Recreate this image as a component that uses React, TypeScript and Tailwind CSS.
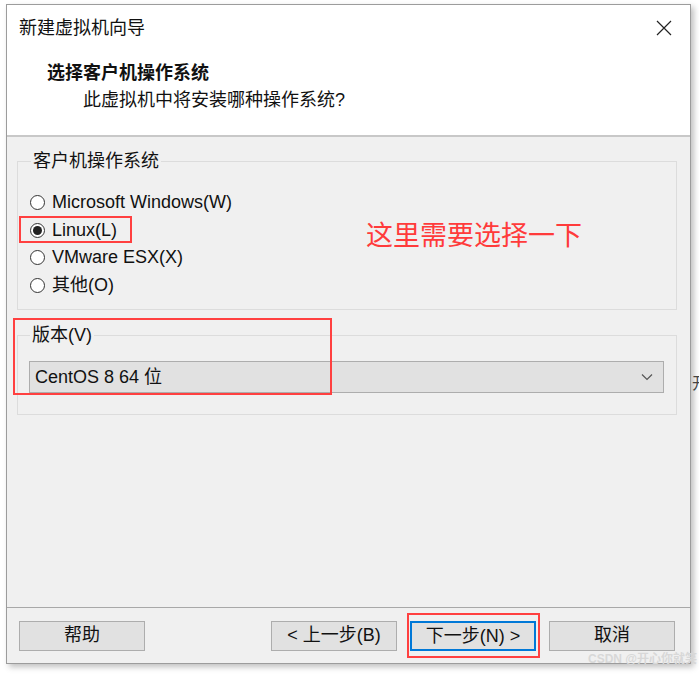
import { ReactNode } from "react";

const font = { fontFamily: '"Liberation Sans", "Noto Sans CJK SC", sans-serif' };

interface RadioProps {
  checked?: boolean;
  children: ReactNode;
}

const Radio = ({ checked, children }: RadioProps) => (
  <div className="flex items-center h-[27.5px]">
    <span className="w-[15px] h-[15px] rounded-full border border-[#333] bg-white flex items-center justify-center mr-[7px]">
      {checked && <span className="w-[9px] h-[9px] rounded-full bg-[#222]" />}
    </span>
    <span className="text-[18px] text-[#111]">{children}</span>
  </div>
);

const Button = ({ children, primary }: { children: ReactNode; primary?: boolean }) => (
  <button
    className={
      "w-[126px] h-[30px] text-[18px] text-[#111] bg-[#e1e1e1] " +
      (primary ? "border-2 border-[#0078d7]" : "border border-[#adadad]")
    }
  >
    {children}
  </button>
);

export default function App() {
  return (
    <div className="relative w-[699px] h-[675px] bg-white overflow-hidden" style={font}>
      <div className="absolute left-[6px] top-[4px] w-[685px] h-[660px] border border-[#9c9c9c] shadow-[3px_3px_6px_rgba(0,0,0,0.25)] flex flex-col bg-[#f0f0f0]">
        <div className="bg-white h-[46px] flex items-center justify-between pl-[12px] pr-[18px]">
          <span className="text-[18px] text-[#111]">新建虚拟机向导</span>
          <svg width="16" height="16" viewBox="0 0 16 16" className="text-[#222]">
            <path d="M1 1L15 15M15 1L1 15" stroke="currentColor" strokeWidth="1.2" />
          </svg>
        </div>
        <div className="bg-white h-[86px] border-b-2 border-[#c8c8c8] pt-[9px]">
          <div className="pl-[40px] text-[18px] font-bold text-[#111] leading-[26px]">选择客户机操作系统</div>
          <div className="pl-[76px] text-[18px] text-[#111] leading-[26px] mt-[1px]">此虚拟机中将安装哪种操作系统?</div>
        </div>
        <div className="flex-1 pl-[10px] pr-[13px] pt-[11px]">
          <fieldset className="border border-[#dcdcdc] h-[162px] pl-[12px]">
            <legend className="text-[18px] text-[#111] px-[2px] ml-[1px] leading-[26px]">客户机操作系统</legend>
            <div className="mt-[15px]">
              <Radio>Microsoft Windows(W)</Radio>
              <Radio checked>Linux(L)</Radio>
              <Radio>VMware ESX(X)</Radio>
              <Radio>其他(O)</Radio>
            </div>
          </fieldset>
          <fieldset className="border border-[#dcdcdc] h-[93px] mt-[12px] pl-[11px] pr-[12px]">
            <legend className="text-[18px] text-[#111] px-[2px] ml-[1px] leading-[26px]">版本(V)</legend>
            <div className="mt-[13px] h-[32px] bg-[#e1e1e1] border border-[#adadad] flex items-center justify-between pl-[5px] pr-[10px]">
              <span className="text-[18px] text-[#111]">CentOS 8 64 位</span>
              <svg width="12" height="8" viewBox="0 0 12 8">
                <path d="M1 1.5L6 6.5L11 1.5" stroke="#555" strokeWidth="1.2" fill="none" />
              </svg>
            </div>
          </fieldset>
        </div>
        <div className="border-t border-[#a8a8a8] h-[56px] flex items-center pl-[12px] pr-[15px]">
          <Button>帮助</Button>
          <div className="flex-1" />
          <div className="flex gap-[13px]">
            <Button>&lt; 上一步(B)</Button>
            <Button primary>下一步(N) &gt;</Button>
            <Button>取消</Button>
          </div>
        </div>
      </div>

      <div className="absolute left-[366px] top-[218px] text-[27px] text-[#ff3b3b] leading-[36px]">这里需要选择一下</div>
      <div className="absolute left-[19px] top-[216px] w-[113px] h-[27px] border-2 border-[#ff4040]" />
      <div className="absolute left-[13px] top-[318px] w-[319px] h-[77px] border-2 border-[#ff4040]" />
      <div className="absolute left-[407px] top-[613px] w-[133px] h-[45px] border-2 border-[#ff4040]" />
      <div className="absolute left-[692px] top-[374px] text-[16px] text-[#444] leading-[20px] overflow-hidden w-[7px]">开</div>
      <div className="absolute left-[588px] top-[650px] text-[12px] font-bold text-[#d8d8d8] whitespace-nowrap">CSDN @开心你就笑</div>
    </div>
  );
}
